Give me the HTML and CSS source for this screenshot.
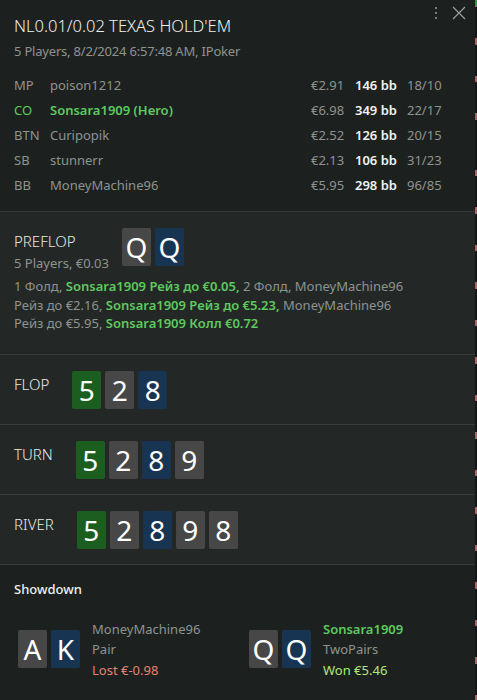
FILE: index.html
```html
<!DOCTYPE html>
<html>
<head>
  <meta charset="UTF-8">
  <title>Hand history</title>
  <link rel="stylesheet" href="styles.css">
</head>
<body>
  <div class="window">
    <div class="panel">

      <div class="header">
        <div class="tools">
          <svg class="more" width="6" height="14" viewBox="0 0 6 14">
            <circle cx="3" cy="2" r="1.1" fill="#8d918f"/>
            <circle cx="3" cy="7" r="1.1" fill="#8d918f"/>
            <circle cx="3" cy="12" r="1.1" fill="#8d918f"/>
          </svg>
          <svg class="close" width="14" height="14" viewBox="0 0 14 14">
            <path d="M1 1 L13 13 M13 1 L1 13" stroke="#9a9e9c" stroke-width="1.2" fill="none"/>
          </svg>
        </div>
        <h1>NL0.01/0.02 TEXAS HOLD'EM</h1>
        <div class="sub">5 Players, 8/2/2024 6:57:48 AM, IPoker</div>

        <div class="players">
          <div class="player">
            <span class="pos">MP</span><span class="name">poison1212</span>
            <span class="money">€2.91</span><span class="bb">146 bb</span><span class="stat">18/10</span>
          </div>
          <div class="player hero">
            <span class="pos">CO</span><span class="name">Sonsara1909 (Hero)</span>
            <span class="money">€6.98</span><span class="bb">349 bb</span><span class="stat">22/17</span>
          </div>
          <div class="player">
            <span class="pos">BTN</span><span class="name">Curipopik</span>
            <span class="money">€2.52</span><span class="bb">126 bb</span><span class="stat">20/15</span>
          </div>
          <div class="player">
            <span class="pos">SB</span><span class="name">stunnerr</span>
            <span class="money">€2.13</span><span class="bb">106 bb</span><span class="stat">31/23</span>
          </div>
          <div class="player">
            <span class="pos">BB</span><span class="name">MoneyMachine96</span>
            <span class="money">€5.95</span><span class="bb">298 bb</span><span class="stat">96/85</span>
          </div>
        </div>
      </div>

      <div class="street preflop">
        <div class="street-head">
          <div class="street-label">
            <div class="street-name">PREFLOP</div>
            <div class="street-info">5 Players, €0.03</div>
          </div>
          <div class="cards">
            <span class="card gray">Q</span><span class="card blue">Q</span>
          </div>
        </div>
        <div class="actions">
          1 Фолд, <b>Sonsara1909 Рейз до €0.05,</b> 2 Фолд, MoneyMachine96<br>
          Рейз до €2.16, <b>Sonsara1909 Рейз до €5.23,</b> MoneyMachine96<br>
          Рейз до €5.95, <b>Sonsara1909 Колл €0.72</b>
        </div>
      </div>

      <div class="street">
        <div class="street-head">
          <div class="street-name">FLOP</div>
          <div class="cards">
            <span class="card green">5</span><span class="card gray">2</span><span class="card blue">8</span>
          </div>
        </div>
      </div>

      <div class="street">
        <div class="street-head">
          <div class="street-name">TURN</div>
          <div class="cards">
            <span class="card green">5</span><span class="card gray">2</span><span class="card blue">8</span><span class="card gray">9</span>
          </div>
        </div>
      </div>

      <div class="street">
        <div class="street-head">
          <div class="street-name">RIVER</div>
          <div class="cards">
            <span class="card green">5</span><span class="card gray">2</span><span class="card blue">8</span><span class="card gray">9</span><span class="card gray">8</span>
          </div>
        </div>
      </div>

      <div class="showdown">
        <div class="showdown-title">Showdown</div>
        <div class="hands">
          <div class="hand">
            <div class="cards">
              <span class="card gray">A</span><span class="card blue">K</span>
            </div>
            <div class="hand-info">
              <div>MoneyMachine96</div>
              <div>Pair</div>
              <div class="lost">Lost €-0.98</div>
            </div>
          </div>
          <div class="hand">
            <div class="cards">
              <span class="card gray">Q</span><span class="card blue">Q</span>
            </div>
            <div class="hand-info">
              <div class="winner">Sonsara1909</div>
              <div>TwoPairs</div>
              <div class="won">Won €5.46</div>
            </div>
          </div>
        </div>
      </div>

    </div>
    <div class="edge"></div>
  </div>
</body>
</html>
```

FILE: styles.css
```css
body {
  margin: 0;
  background-color: #1c211f;
  font-family: "Noto Sans", "Open Sans", sans-serif;
  color: #8e9390;
}
.window {
  display: flex;
  height: 700px;
  overflow: hidden;
}
.panel {
  width: 475px;
  background-color: #1c211f;
}
.edge {
  width: 2px;
  background-color: #141716;
  background-image: repeating-linear-gradient(to bottom, transparent 0, transparent 31px, #a8646a 31px, #a8646a 37.5px);
  background-position: 0 133px;
  background-repeat: repeat-y;
  border-top: 6px solid #2f9a4a;
}

/* header */
.header {
  position: relative;
  padding: 13px 14px 13px 14px;
  border-bottom: 1px solid #353a38;
}
.tools {
  position: absolute;
  top: 6px;
  right: 9px;
  display: flex;
  align-items: center;
  gap: 13px;
}
h1 {
  margin: 0;
  font-size: 16.5px;
  font-weight: 300;
  color: #eef0ef;
  line-height: 26px;
}
.sub {
  font-size: 13px;
  letter-spacing: -0.2px;
  line-height: 24px;
  margin-bottom: 10px;
}
.player {
  display: grid;
  grid-template-columns: 36px 261px 44px 52px auto;
  font-size: 13px;
  line-height: 25px;
}
.player .bb {
  color: #f2f2f2;
  font-weight: 600;
}
.player.hero .pos,
.player.hero .name {
  color: #5fc95f;
}
.player.hero .name {
  font-weight: 600;
}

/* streets */
.street {
  background-color: #232826;
  border-bottom: 1px solid #383d3b;
  padding: 16px 14px 15px 14px;
}
.preflop {
  padding-top: 16px;
  padding-bottom: 21px;
}
.street-head {
  display: flex;
  align-items: flex-start;
}
.street-head > .street-name {
  margin-right: 23px;
}
.street-label {
  margin-right: 13px;
}
.street-name {
  font-size: 15px;
  font-weight: 300;
  color: #e6e8e7;
  line-height: 26px;
}
.street-info {
  font-size: 13px;
  line-height: 18px;
}
.cards {
  display: flex;
  gap: 4px;
}
.card {
  width: 29px;
  height: 38px;
  border-radius: 2px;
  color: #ffffff;
  font-size: 28px;
  line-height: 38px;
  text-align: center;
}
.card.gray { background-color: #474747; }
.card.blue { background-color: #173552; }
.card.green { background-color: #1b5e20; }

.actions {
  margin-top: 5px;
  font-size: 13px;
  line-height: 18.5px;
}
.actions b {
  color: #5fc95f;
  font-weight: 600;
}

/* showdown */
.showdown {
  padding: 15px 14px;
}
.showdown-title {
  font-size: 13px;
  color: #eef0ef;
  font-weight: 500;
}
.hands {
  display: flex;
  margin-top: 21px;
  padding-left: 4px;
}
.hand {
  display: flex;
  flex-shrink: 0;
  align-items: center;
  width: 231px;
}
.hand-info {
  margin-left: 12px;
  font-size: 13px;
  line-height: 20.5px;
}
.winner {
  color: #5fc95f;
  font-weight: 600;
}
.lost { color: #e58375; }
.won { color: #b3e67a; }
```
